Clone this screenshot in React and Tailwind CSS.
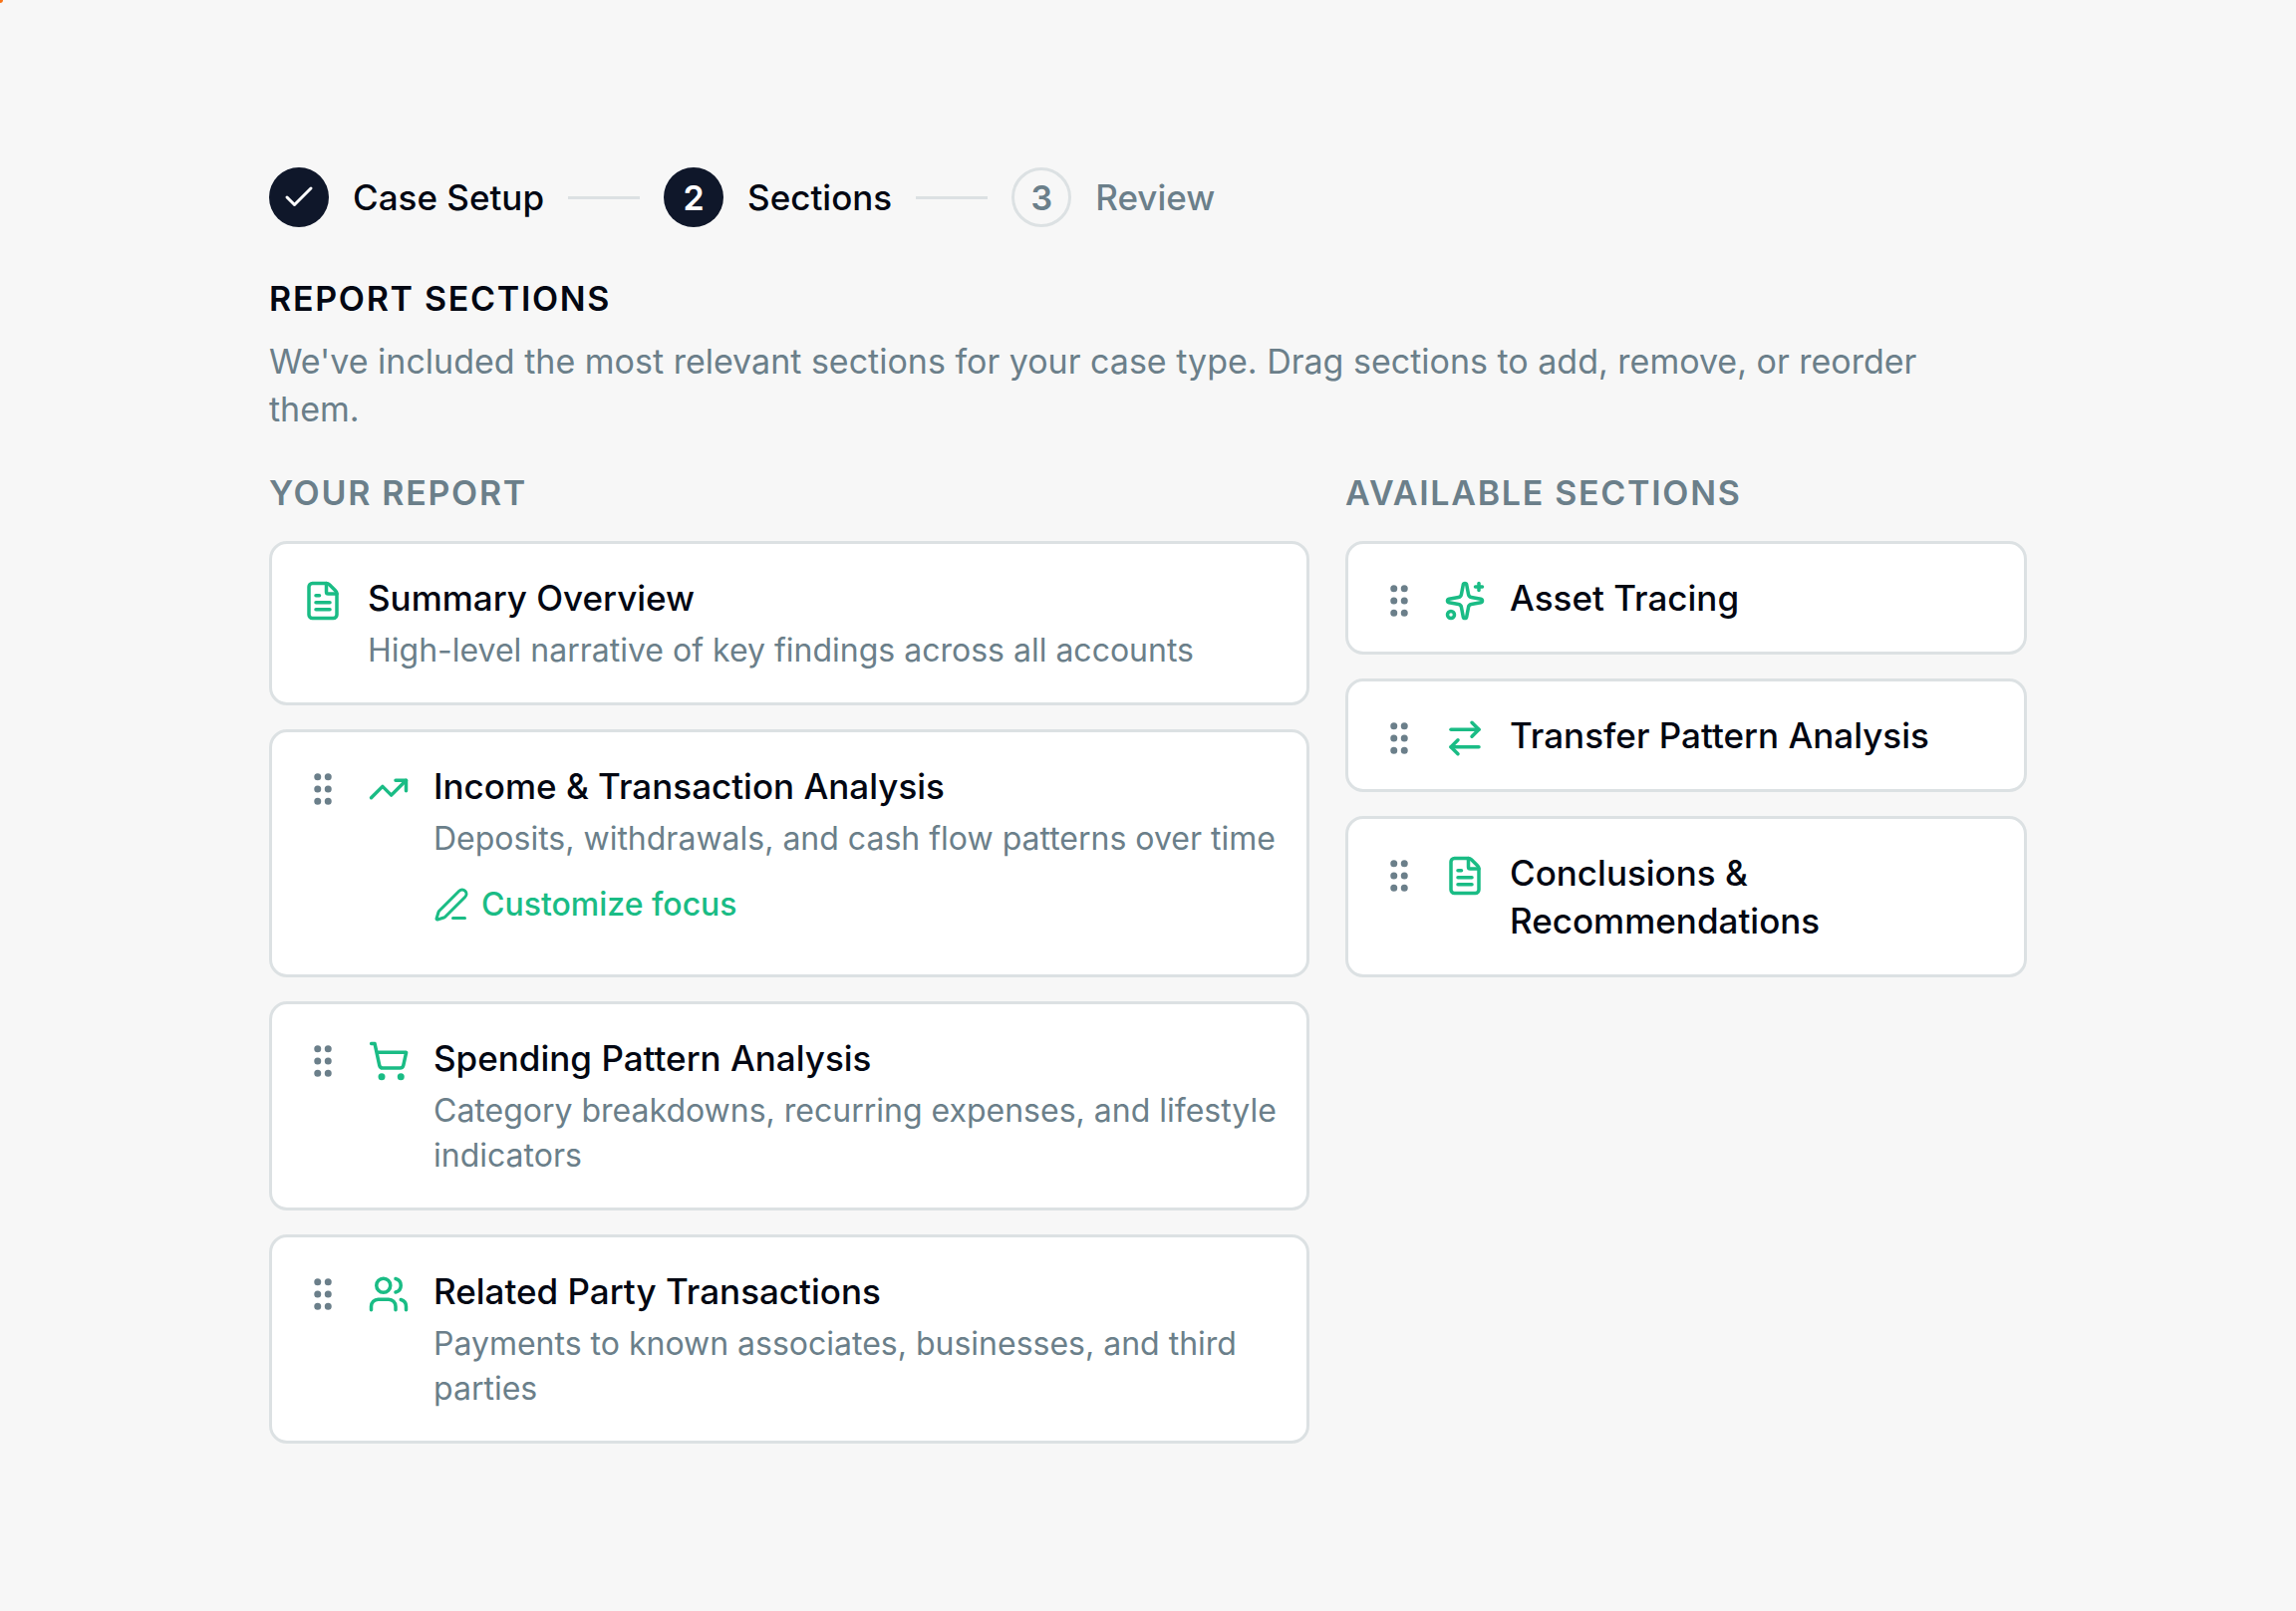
import { Fragment } from 'react';
import {
  ArrowRightLeft,
  Check,
  FileText,
  GripVertical,
  PenLine,
  ShoppingCart,
  Sparkles,
  TrendingUp,
  Users
} from 'lucide-react';

const steps = [
  { number: 1, label: 'Case Setup', status: 'done' },
  { number: 2, label: 'Sections', status: 'current' },
  { number: 3, label: 'Review', status: 'upcoming' }
];

const reportSections = [
  {
    title: 'Summary Overview',
    description: 'High-level narrative of key findings across all accounts',
    icon: FileText,
    locked: true
  },
  {
    title: 'Income & Transaction Analysis',
    description: 'Deposits, withdrawals, and cash flow patterns over time',
    icon: TrendingUp,
    customizable: true
  },
  {
    title: 'Spending Pattern Analysis',
    description: 'Category breakdowns, recurring expenses, and lifestyle indicators',
    icon: ShoppingCart
  },
  {
    title: 'Related Party Transactions',
    description: 'Payments to known associates, businesses, and third parties',
    icon: Users
  }
];

const availableSections = [
  { title: 'Asset Tracing', icon: Sparkles },
  { title: 'Transfer Pattern Analysis', icon: ArrowRightLeft },
  { title: 'Conclusions & Recommendations', icon: FileText }
];

const circleStyles = {
  done: 'bg-[#0f172a] text-white',
  current: 'bg-[#0f172a] text-white',
  upcoming: 'border-3 border-[#dce1e3] text-[#6b7f8a]'
};

function Stepper() {
  return (
    <ol className="flex items-center gap-6">
      {steps.map((step, i) => (
        <Fragment key={step.number}>
          {i > 0 && <li aria-hidden="true" className="h-[3px] w-18 bg-[#dce1e3]" />}
          <li
            className="flex items-center gap-6"
            aria-current={step.status === 'current' ? 'step' : undefined}
          >
            <span
              className={`flex size-15 items-center justify-center rounded-full text-[34px] leading-[45px] font-semibold ${circleStyles[step.status]}`}
            >
              {step.status === 'done' ? <Check className="size-9" /> : step.number}
            </span>
            <span
              className={`text-[35px] leading-12 font-medium ${step.status === 'upcoming' ? 'text-[#6b7f8a]' : 'text-[#030712]'}`}
            >
              {step.label}
            </span>
          </li>
        </Fragment>
      ))}
    </ol>
  );
}

function SectionCard({ section }) {
  const Icon = section.icon;

  return (
    <li className="flex items-start gap-6 rounded-[18px] border-3 border-[#dce1e3] bg-white p-[30px]">
      {!section.locked && (
        <button
          type="button"
          aria-label={`Move ${section.title}`}
          className="mt-1.5 shrink-0 cursor-grab text-[#6b7f8a]"
        >
          <GripVertical className="size-[42px]" />
        </button>
      )}
      <Icon className="mt-1.5 size-[42px] shrink-0 text-[#1abc85]" />
      <div className="min-w-0 flex-1">
        <h3 className="text-[35px] leading-12 font-medium text-[#030712]">{section.title}</h3>
        {section.description && (
          <p className="mt-1.5 text-[32px] leading-[45px] text-[#6b7f8a]">{section.description}</p>
        )}
        {section.customizable && (
          <button
            type="button"
            className="mt-[21px] mb-[18px] flex items-center gap-3 text-[32px] leading-[45px] font-medium text-[#1abc85]"
          >
            <PenLine className="size-9" />
            Customize focus
          </button>
        )}
      </div>
    </li>
  );
}

function SectionColumn({ title, sections, className }) {
  return (
    <section className={className}>
      <h2 className="text-[34px] leading-12 font-semibold tracking-wider text-[#6b7f8a] uppercase">{title}</h2>
      <ul className="mt-6 flex flex-col gap-6">
        {sections.map(section => (
          <SectionCard key={section.title} section={section} />
        ))}
      </ul>
    </section>
  );
}

function App() {
  return (
    <div className="relative min-h-screen bg-[#f7f7f7] px-12 py-42 font-['Inter',sans-serif]">
      <span className="absolute top-0 left-0 size-[3px] rounded-br-full bg-[#f97316]" />
      <main className="mx-auto max-w-[1764px]">
        <Stepper />

        <h1 className="mt-12 text-[34px] leading-12 font-semibold tracking-wider text-[#030712] uppercase">
          Report Sections
        </h1>
        <p className="mt-[15px] max-w-[1720px] text-[34px] leading-12 text-[#6b7f8a]">
          We've included the most relevant sections for your case type. Drag sections to add, remove, or reorder them.
        </p>

        <div className="mt-9 grid grid-cols-5 items-start gap-9">
          <SectionColumn title="Your Report" sections={reportSections} className="col-span-3" />
          <SectionColumn title="Available Sections" sections={availableSections} className="col-span-2" />
        </div>
      </main>
    </div>
  );
}

export default App;
